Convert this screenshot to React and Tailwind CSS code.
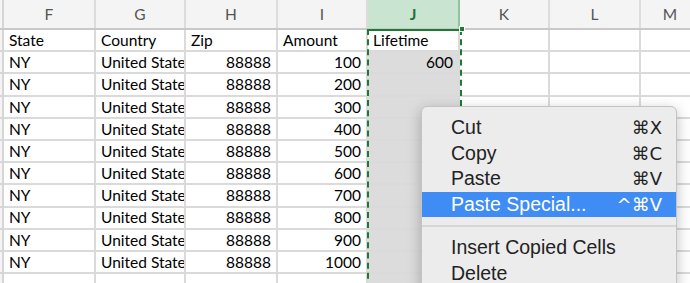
import React from 'react';

const cols = [
  { key: 'F', w: 'w-[92px]' },
  { key: 'G', w: 'w-[90px]' },
  { key: 'H', w: 'w-[92px]' },
  { key: 'I', w: 'w-[90px]' },
  { key: 'J', w: 'w-[92px]' },
  { key: 'K', w: 'w-[90px]' },
  { key: 'L', w: 'w-[91px]' },
  { key: 'M', w: 'w-[60px]' },
];

const rows = [
  ['State', 'Country', 'Zip', 'Amount', 'Lifetime'],
  ...[100, 200, 300, 400, 500, 600, 700, 800, 900, 1000].map((n, i) => [
    'NY',
    'United States',
    '88888',
    String(n),
    i === 0 ? '600' : '',
  ]),
  ['', '', '', '', ''],
];

const menu = [
  { label: 'Cut', key: '⌘X' },
  { label: 'Copy', key: '⌘C' },
  { label: 'Paste', key: '⌘V' },
  { label: 'Paste Special...', key: '^⌘V', active: true },
  { sep: true },
  { label: 'Insert Copied Cells' },
  { label: 'Delete' },
];

function Cell({ col, value, ri, ci }) {
  const numeric = ri > 0 && (ci === 2 || ci === 3 || ci === 4);
  const filled = ci === 4 && ri > 0;
  return (
    <div
      className={`${col.w} shrink-0 h-[22.2px] border-r-2 border-b-2 border-[#dadada] px-[5px] pt-[1px] flex items-center overflow-hidden whitespace-nowrap ${
        numeric ? 'justify-end' : ''
      } ${filled ? 'bg-[#dcdcdc]' : 'bg-white'}`}
    >
      {value}
    </div>
  );
}

export default function App() {
  return (
    <div
      className="relative w-[690px] h-[283px] overflow-hidden bg-white text-[15.5px] text-black"
      style={{ fontFamily: 'Lato, "Open Sans", sans-serif' }}
    >
      {/* column headers */}
      <div className="flex h-[30px] bg-[#f4f4f4] border-b-2 border-[#c9c9c9]">
        <div className="w-[4px] shrink-0 border-r-2 border-[#d6d6d6]" />
        {cols.map((c) => (
          <div
            key={c.key}
            className={`${c.w} shrink-0 flex items-center justify-center border-r-2 pt-[1px] ${
              c.key === 'J'
                ? 'bg-[#c9e4d1] border-[#8cc59c] text-[#1c7233] font-bold'
                : 'border-[#dcdcdc] text-[#555]'
            }`}
          >
            {c.key}
          </div>
        ))}
      </div>

      {/* rows */}
      {rows.map((r, ri) => (
        <div key={ri} className="flex">
          <div className="w-[4px] shrink-0 h-[22.2px] bg-[#f4f4f4] border-r-2 border-b-2 border-[#d6d6d6]" />
          {cols.map((c, ci) => (
            <Cell key={c.key} col={c} value={r[ci] || ''} ri={ri} ci={ci} />
          ))}
        </div>
      ))}

      {/* copied range marching ants */}
      <div className="absolute left-[367px] top-[29px] w-[95px] h-[260px] border-x-2 border-dashed border-[#1d7a35] pointer-events-none">
        <div className="absolute top-0 left-0 right-0 border-t-2 border-[#1d7a35]" />
        <div className="absolute -top-[3px] -right-[5px] w-[6px] h-[6px] bg-[#1d7a35] border border-white" />
      </div>

      {/* context menu */}
      <div
        className="absolute left-[421px] top-[106px] w-[256px] h-[200px] rounded-[6px] bg-[#ececec] border border-[#c4c4c4] shadow-[0_4px_14px_rgba(0,0,0,0.25)] pt-[8px] text-[19.5px] text-[#222]"
        style={{ fontFamily: '"Liberation Sans", Arial, sans-serif' }}
      >
        {menu.map((m, i) =>
          m.sep ? (
            <div key={i} className="h-[18px] flex items-center">
              <div className="w-full h-[2px] bg-[#d6d6d6]" />
            </div>
          ) : (
            <div
              key={i}
              className={`h-[25.5px] flex items-center justify-between pl-[29px] pr-[14px] ${
                m.active ? 'bg-[#3f8cf5] text-white' : ''
              }`}
            >
              <span>{m.label}</span>
              {m.key && (
                <span style={{ fontFamily: '"DejaVu Sans", sans-serif' }} className="text-[18px]">
                  {m.key}
                </span>
              )}
            </div>
          )
        )}
      </div>
    </div>
  );
}
